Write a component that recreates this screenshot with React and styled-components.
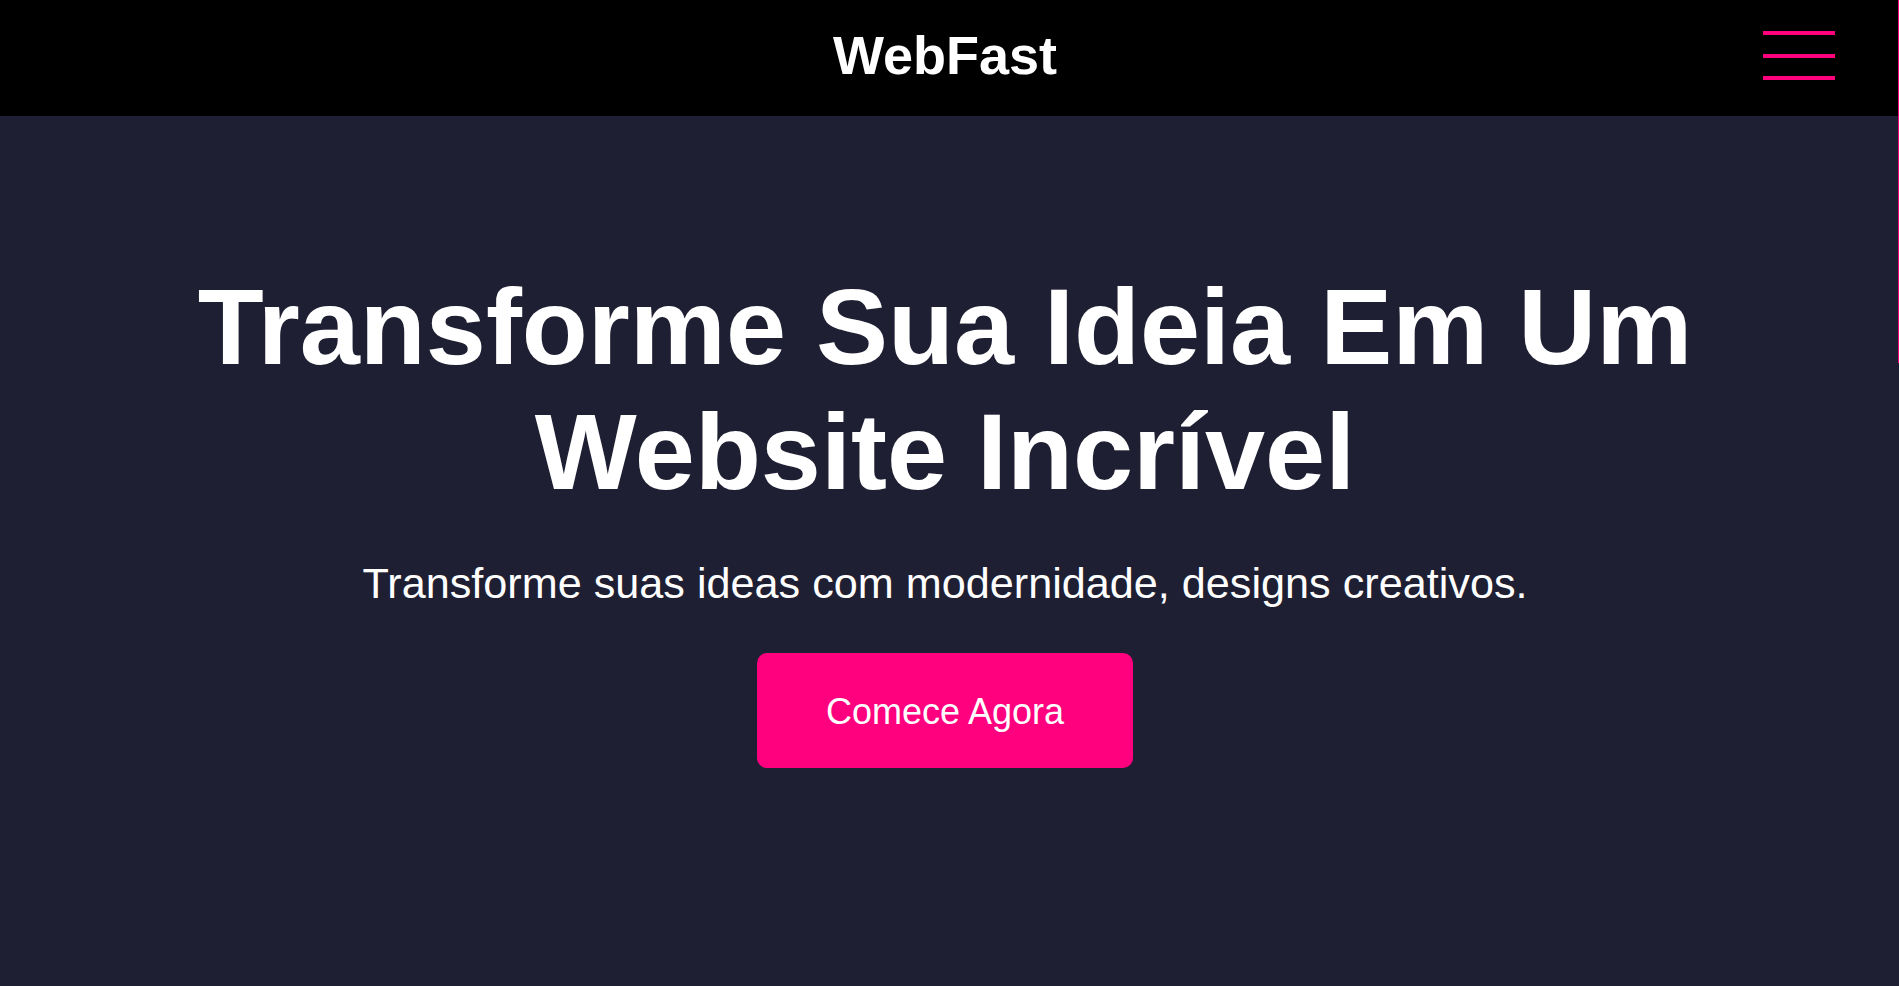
import React from 'react';
import styled, { createGlobalStyle } from 'styled-components';

const PINK = '#ff007f';
const NAVY = '#1f1f33';

export default function App() {
    return (
        <>
            <GlobalStyle />
            <Page>
                <Header>
                    <Logo href="#">WebFast</Logo>
                    <MenuButton aria-label="Menu">
                        <Bar />
                        <Bar />
                        <Bar />
                    </MenuButton>
                </Header>
                <SideNav />
                <Hero>
                    <Title>Transforme Sua Ideia Em Um<br />Website Incrível</Title>
                    <Subtitle>Transforme suas ideas com modernidade, designs creativos.</Subtitle>
                    <CtaButton href="#">Comece Agora</CtaButton>
                </Hero>
            </Page>
        </>
    );
}

//#region -= Styled Components =-
const GlobalStyle = createGlobalStyle`
    html, body {
        margin: 0;
        padding: 0;
        background: ${NAVY};
        font-family: "Liberation Sans", Arial, sans-serif;
        overflow: hidden;
    }
`;
const Page = styled.div`
    min-height: 100vh;
    background: ${NAVY};
    display: flex;
    flex-direction: column;
`;
const Header = styled.header`
    height: 116px;
    background: #000000;
    display: flex;
    align-items: center;
    justify-content: center;
    position: relative;
    padding-right: 9px;
`;
const Logo = styled.a`
    color: #FFFFFF;
    font-size: 54px;
    font-weight: 700;
    text-decoration: none;
    margin-top: -6px;
`;
const MenuButton = styled.button`
    position: absolute;
    right: 64px;
    top: 31px;
    width: 72px;
    height: 49px;
    padding: 0;
    border: none;
    background: transparent;
    display: flex;
    flex-direction: column;
    justify-content: space-between;
    cursor: pointer;
`;
const Bar = styled.span`
    display: block;
    width: 100%;
    height: 4px;
    background: ${PINK};
`;
const SideNav = styled.nav`
    position: fixed;
    top: 0;
    left: calc(100% - 1px);
    width: 260px;
    height: 363px;
    background: #000000;
    border-left: 1px solid ${PINK};
`;
const Hero = styled.section`
    flex: 1;
    display: flex;
    flex-direction: column;
    align-items: center;
    padding: 148px 9px 0 0;
    text-align: center;
`;
const Title = styled.h1`
    margin: 0;
    color: #FFFFFF;
    font-size: 108px;
    line-height: 125px;
    font-weight: 700;
`;
const Subtitle = styled.p`
    margin: 45px 0 0;
    color: #FFFFFF;
    font-size: 43.2px;
    font-weight: 400;
`;
const CtaButton = styled.a`
    margin-top: 45px;
    display: inline-block;
    padding: 38px 69px 35px;
    background: ${PINK};
    color: #FFFFFF;
    font-size: 36px;
    text-decoration: none;
    border-radius: 10px;
`;
//#endregion
